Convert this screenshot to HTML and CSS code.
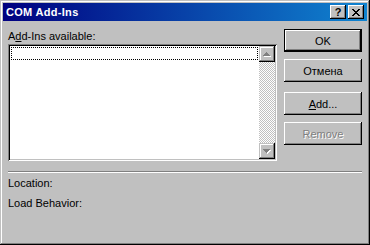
FILE: index.html
```html
<!DOCTYPE html>
<html>
<head>
<meta charset="utf-8">
<link rel="stylesheet" href="styles.css">
</head>
<body>
<div class="window">
  <div class="titlebar">
    <span class="title">COM Add-Ins</span>
    <div class="tbtns">
      <span class="tbtn help">?</span>
      <span class="tbtn close"><svg width="8" height="7" viewBox="0 0 8 7" shape-rendering="crispEdges"><path d="M0 0h2v1h-2zM6 0h2v1h-2zM1 1h2v1h-2zM5 1h2v1h-2zM2 2h4v1h-4zM3 3h2v1h-2zM2 4h4v1h-4zM1 5h2v1h-2zM5 5h2v1h-2zM0 6h2v1h-2zM6 6h2v1h-2z" fill="#000"/></svg></span>
    </div>
  </div>
  <div class="content">
    <div class="top">
      <div class="left">
        <div class="label">A<u>d</u>d-Ins available:</div>
        <div class="listbox">
          <div class="items"><div class="item"></div></div>
          <div class="scrollbar">
            <div class="sbtn"><svg width="16" height="16" viewBox="0 0 16 16" shape-rendering="crispEdges"><path transform="translate(1 1)" d="M7 6h1v1h-1zM6 7h3v1h-3zM5 8h5v1h-5zM4 9h7v1h-7z" fill="#fff"/><path d="M7 6h1v1h-1zM6 7h3v1h-3zM5 8h5v1h-5zM4 9h7v1h-7z" fill="#808080"/></svg></div>
            <div class="track"></div>
            <div class="sbtn"><svg width="16" height="16" viewBox="0 0 16 16" shape-rendering="crispEdges"><path transform="translate(1 1)" d="M4 6h7v1h-7zM5 7h5v1h-5zM6 8h3v1h-3zM7 9h1v1h-1z" fill="#fff"/><path d="M4 6h7v1h-7zM5 7h5v1h-5zM6 8h3v1h-3zM7 9h1v1h-1z" fill="#808080"/></svg></div>
          </div>
        </div>
      </div>
      <div class="buttons">
        <button class="btn default">OK</button>
        <button class="btn cancel">Отмена</button>
        <button class="btn add"><u>A</u>dd...</button>
        <button class="btn remove" disabled>Remove</button>
      </div>
    </div>
    <div class="sep"></div>
    <div class="info first">Location:</div>
    <div class="info second">Load Behavior:</div>
  </div>
</div>
</body>
</html>
```

FILE: styles.css
```css
body {
  margin: 0;
  font-family: "Liberation Sans", Arial, sans-serif;
  font-size: 11px;
  color: #000;
}

.window {
  width: 370px;
  height: 245px;
  box-sizing: border-box;
  padding: 3px;
  background: #c0c0c0;
  box-shadow: inset -1px -1px #000, inset 1px 1px #c0c0c0, inset -2px -2px #808080, inset 2px 2px #fff;
}

.titlebar {
  height: 18px;
  display: flex;
  align-items: center;
  padding-left: 3px;
  background: linear-gradient(to right, #000080, #1084d0);
  color: #fff;
}

.title {
  flex: 1;
  font-weight: bold;
  line-height: 13px;
  letter-spacing: 0.3px;
}

.tbtns {
  display: flex;
  gap: 2px;
  margin-right: 3px;
}

.tbtn {
  width: 16px;
  height: 14px;
  box-sizing: border-box;
  background: #c0c0c0;
  box-shadow: inset -1px -1px #000, inset 1px 1px #fff, inset -2px -2px #808080;
  display: flex;
  align-items: center;
  justify-content: center;
  color: #000;
}

.tbtn.help {
  font-weight: bold;
  font-size: 11px;
  line-height: 11px;
}

.tbtn svg {
  display: block;
}

.content {
  padding: 8px 5px 0;
}

.top {
  display: flex;
  gap: 7px;
}

.left {
  width: 269px;
}

.label {
  line-height: 13px;
  margin: 1px 0;
}

.listbox {
  height: 117px;
  box-sizing: border-box;
  padding: 2px;
  display: flex;
  background: #fff;
  box-shadow: inset 1px 1px #808080, inset -1px -1px #fff, inset 2px 2px #000, inset -2px -2px #c0c0c0;
}

.items {
  flex: 1;
  padding: 1px;
}

.item {
  height: 13px;
  box-sizing: border-box;
  border: 1px dotted #000;
}

.scrollbar {
  width: 16px;
  display: flex;
  flex-direction: column;
}

.track {
  flex: 1;
  background-color: #fff;
  background-image: conic-gradient(#c0c0c0 25%, #fff 0 50%, #c0c0c0 0 75%, #fff 0);
  background-size: 2px 2px;
}

.sbtn {
  height: 16px;
  background: #c0c0c0;
  box-shadow: inset -1px -1px #000, inset 1px 1px #c0c0c0, inset -2px -2px #808080, inset 2px 2px #fff;
}

.sbtn svg {
  display: block;
}

.buttons {
  width: 78px;
  display: flex;
  flex-direction: column;
}

.btn {
  height: 23px;
  padding: 0;
  border: 0;
  font: inherit;
  color: #000;
  background: #c0c0c0;
  box-shadow: inset -1px -1px #000, inset 1px 1px #fff, inset -2px -2px #808080;
}

.btn.default {
  box-shadow: inset 0 0 0 1px #000, inset -2px -2px #000, inset 2px 2px #fff, inset -3px -3px #808080;
}

.btn.cancel {
  margin-top: 7px;
}

.btn.add {
  margin-top: 10px;
}

.btn.remove {
  margin-top: 7px;
  color: #808080;
  text-shadow: 1px 1px #fff;
}

.sep {
  margin-top: 10px;
  border-top: 1px solid #808080;
  border-bottom: 1px solid #fff;
}

.info {
  line-height: 13px;
}

.info.first {
  margin-top: 4px;
}

.info.second {
  margin-top: 7px;
}
```
